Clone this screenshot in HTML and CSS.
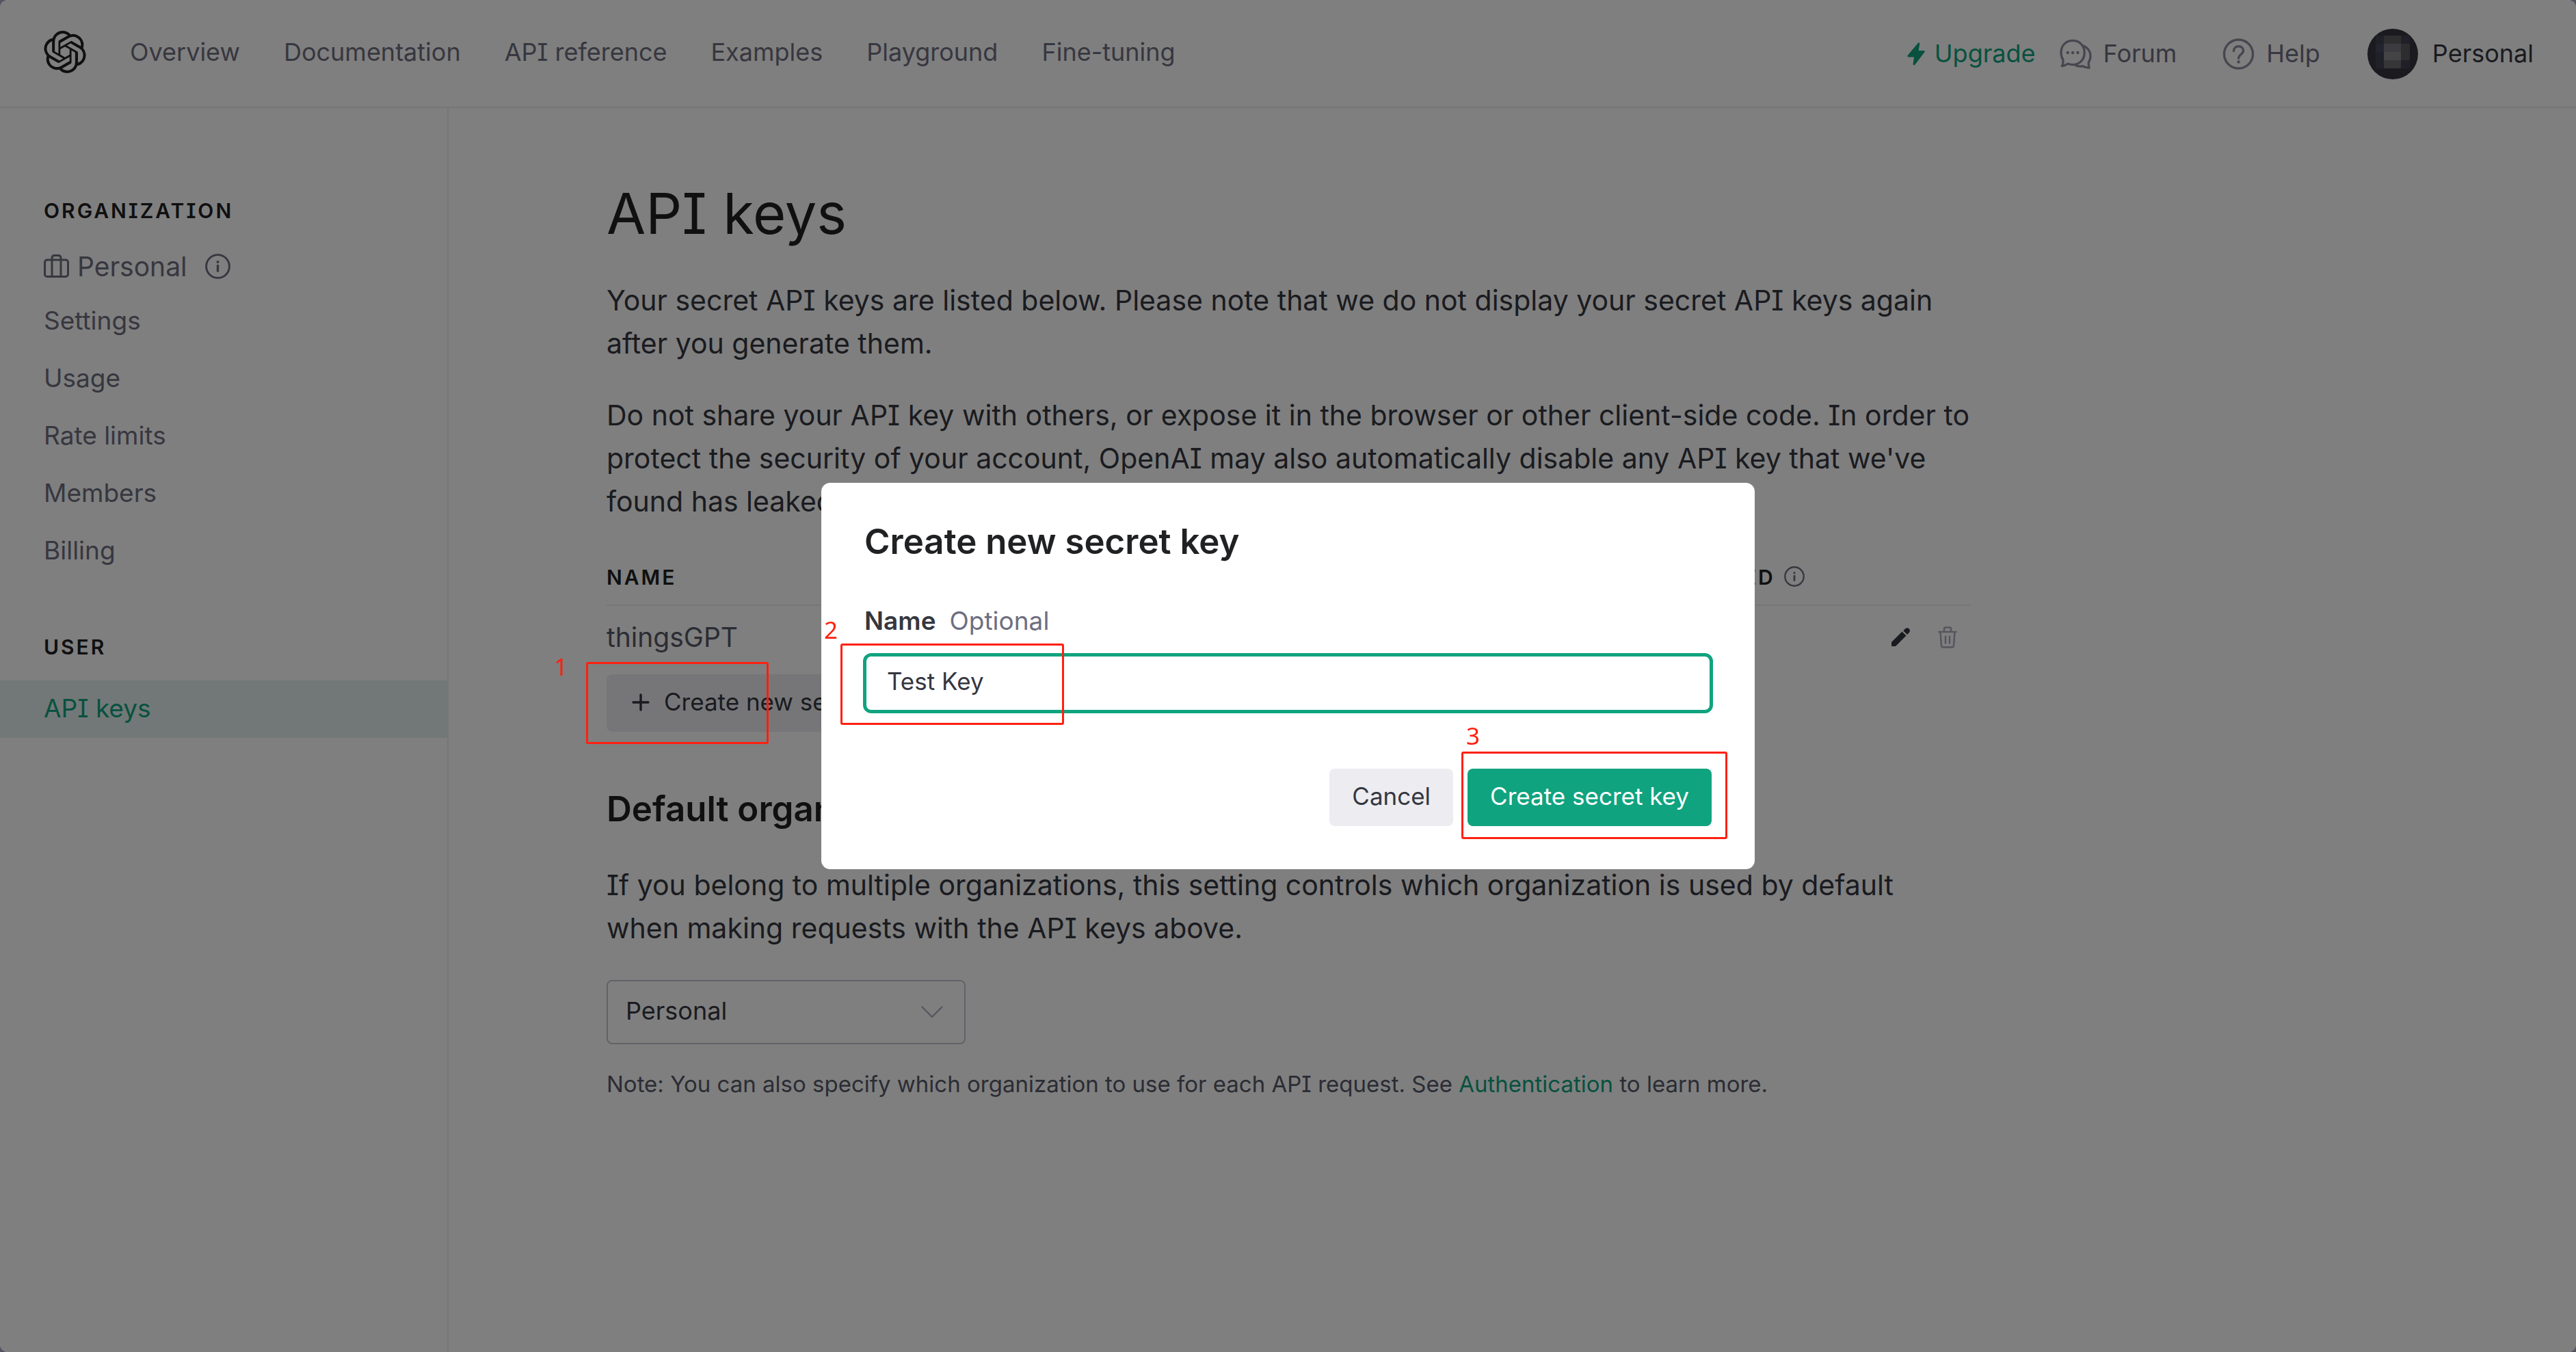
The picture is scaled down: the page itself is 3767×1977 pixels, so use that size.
FILE: index.html
```html
<!DOCTYPE html>
<html lang="en">
<head>
<meta charset="utf-8">
<title>API keys</title>
<link rel="stylesheet" href="styles.css">
</head>
<body>
<svg class="defs" aria-hidden="true">
  <symbol id="info" viewBox="0 0 14 14"><circle cx="7" cy="7" r="6.4" fill="none" stroke="currentColor" stroke-width="1.1"/><path d="M7 6.6v3" stroke="currentColor" stroke-width="1.3" stroke-linecap="round"/><circle cx="7" cy="4.5" r=".75" fill="currentColor"/></symbol>
</svg>
<div class="page">
  <header class="header">
    <a class="logo" href="#" aria-label="Home"><svg viewBox="0 0 24 24" fill="currentColor"><path d="M22.2819 9.8211a5.9847 5.9847 0 0 0-.5157-4.9108 6.0462 6.0462 0 0 0-6.5098-2.9A6.0651 6.0651 0 0 0 4.9807 4.1818a5.9847 5.9847 0 0 0-3.9977 2.9 6.0462 6.0462 0 0 0 .7427 7.0966 5.98 5.98 0 0 0 .511 4.9107 6.051 6.051 0 0 0 6.5146 2.9001A5.9847 5.9847 0 0 0 13.2599 24a6.0557 6.0557 0 0 0 5.7718-4.2058 5.9894 5.9894 0 0 0 3.9977-2.9001 6.0557 6.0557 0 0 0-.7475-7.0729zm-9.022 12.6081a4.4755 4.4755 0 0 1-2.8764-1.0408l.1419-.0804 4.7783-2.7582a.7948.7948 0 0 0 .3927-.6813v-6.7369l2.02 1.1686a.071.071 0 0 1 .038.052v5.5826a4.504 4.504 0 0 1-4.4945 4.4944zm-9.6607-4.1254a4.4708 4.4708 0 0 1-.5346-3.0137l.142.0852 4.783 2.7582a.7712.7712 0 0 0 .7806 0l5.8428-3.3685v2.3324a.0804.0804 0 0 1-.0332.0615L9.74 19.9502a4.4992 4.4992 0 0 1-6.1408-1.6464zM2.3408 7.8956a4.485 4.485 0 0 1 2.3655-1.9728V11.6a.7664.7664 0 0 0 .3879.6765l5.8144 3.3543-2.0201 1.1685a.0757.0757 0 0 1-.071 0l-4.8303-2.7865A4.504 4.504 0 0 1 2.3408 7.872zm16.5963 3.8558L13.1038 8.364 15.1192 7.2a.0757.0757 0 0 1 .071 0l4.8303 2.7913a4.4944 4.4944 0 0 1-.6765 8.1042v-5.6772a.79.79 0 0 0-.407-.667zm2.0107-3.0231l-.142-.0852-4.7735-2.7818a.7759.7759 0 0 0-.7854 0L9.409 9.2297V6.8974a.0662.0662 0 0 1 .0284-.0615l4.8303-2.7866a4.4992 4.4992 0 0 1 6.6802 4.66zM8.3065 12.863l-2.02-1.1638a.0804.0804 0 0 1-.038-.0567V6.0742a4.4992 4.4992 0 0 1 7.3757-3.4537l-.142.0805L8.704 5.459a.7948.7948 0 0 0-.3927.6813zm1.0976-2.3654l2.602-1.4998 2.6069 1.4998v2.9994l-2.5974 1.4997-2.6067-1.4997Z"/></svg></a>
    <nav class="nav">
      <a href="#">Overview</a>
      <a href="#">Documentation</a>
      <a href="#">API reference</a>
      <a href="#">Examples</a>
      <a href="#">Playground</a>
      <a href="#">Fine-tuning</a>
    </nav>
    <div class="tools">
      <a class="tool upgrade" href="#"><svg class="bolt" viewBox="0 0 26 34" fill="currentColor"><path d="M16 .8 1 18.6c-1.200 1.400-.5 2.800 1.200 2.800H10L8.600 31.500c-.2 2 1.400 2.600 2.600 1.200L25.200 14.600c1-1.400.4-2.600-1.200-2.600h-7.400L18.200 2C18.400.2 17-.4 16 .8z"/></svg>Upgrade</a>
      <a class="tool forum" href="#"><svg class="round" viewBox="0 0 48 46" fill="none" stroke="currentColor" stroke-width="3.400" stroke-linejoin="round" stroke-linecap="round"><path d="M3.500 41c1.800-3.500 2-6.500 1.500-9.500C2.800 28.500 2 24.500 2 21 2 10 9.500 3 19.500 3S37 10.500 37 21s-7.500 18-17.500 18c-3 0-5-.6-7-1.400-2.500.4-5 3.400-9 3.400z"/><path d="M36 11c6 3 10 8 10 15 0 4-1.200 7-2.800 9.500-.4 3 .2 5.500 .8 8-4.500 0-7-.8-9.500-2.500-4.500 1-8.500.5-12-2"/><g fill="currentColor" stroke="none"><circle cx="12" cy="21" r="2.300"/><circle cx="19.500" cy="21" r="2.300"/><circle cx="27" cy="21" r="2.300"/></g></svg>Forum</a>
      <a class="tool help" href="#"><svg class="round" viewBox="0 0 46 46" fill="none" stroke="currentColor" stroke-width="3.400"><circle cx="23" cy="23" r="21"/><path d="M16 18.500c0-4 3-6.700 7-6.700s7 2.700 7 6.500c0 5-7 5.500-7 11" stroke-linecap="round"/><circle cx="23" cy="34.500" r="2.300" fill="currentColor" stroke="none"/></svg>Help</a>
      <button class="tool account" type="button"><svg class="avatar" viewBox="0 0 74 74"><clipPath id="disc"><circle cx="37" cy="37" r="37"/></clipPath><g clip-path="url(#disc)"><path fill="#34353f" d="M0 0h74v74H0z"/><path fill="#3f4150" d="M12 10h50v48H12z"/><path fill="#46485c" d="M12 22h12v12H12z"/><path fill="#5c5c62" d="M24 10h25v12H24z"/><path fill="#787880" d="M24 22h25v12H24z"/><path fill="#88868c" d="M24 34h25v12H24z"/><path fill="#6c6a70" d="M24 46h25v12H24z"/><path fill="#5a5a60" d="M49 22h13v24H49z"/></g></svg>Personal</button>
    </div>
  </header>
  <div class="body">
    <aside class="sidebar">
      <h2 class="group">ORGANIZATION</h2>
      <div class="org"><svg class="case" viewBox="0 0 37 34" fill="none" stroke="currentColor" stroke-width="3"><rect x="1.500" y="8" width="34" height="24.500" rx="3.500"/><path d="M12 32V5.500c0-2.500 1.500-4 4-4h5c2.500 0 4 1.500 4 4V32"/></svg>Personal<svg class="info"><use href="#info"/></svg></div>
      <a class="item" href="#">Settings</a>
      <a class="item" href="#">Usage</a>
      <a class="item" href="#">Rate limits</a>
      <a class="item" href="#">Members</a>
      <a class="item" href="#">Billing</a>
      <h2 class="group user">USER</h2>
      <a class="item active" href="#">API keys</a>
    </aside>
    <main class="main">
      <h1>API keys</h1>
      <p>Your secret API keys are listed below. Please note that we do not display your secret API keys again after you generate them.</p>
      <p>Do not share your API key with others, or expose it in the browser or other client-side code. In order to protect the security of your account, OpenAI may also automatically disable any API key that we've found has leaked publicly.</p>
      <table class="keys">
        <thead><tr><th class="c-name">NAME</th><th class="c-key">KEY</th><th class="c-date">CREATED</th><th class="c-used">LAST USED<svg class="info small"><use href="#info"/></svg></th><th class="c-act"></th></tr></thead>
        <tbody><tr><td>thingsGPT</td><td></td><td></td><td></td><td>
          <div class="actions">
            <button type="button" aria-label="Edit"><svg viewBox="0 0 28 28" fill="currentColor"><path d="M0 27v-6L15.500 5.500l6 6L6 27zM17.200 4.200 20 1.500c1.800-1.800 4.200-1.600 5.800 0s1.700 3.700 0 5.500l-2.700 2.900z"/></svg></button>
            <button class="trash" type="button" aria-label="Delete"><svg viewBox="0 0 28 32" fill="none" stroke="currentColor" stroke-width="2.600" stroke-linecap="round" stroke-linejoin="round"><path d="M1.500 8h25M9 7.500V3.500c0-1.200.8-2 2-2h6c1.200 0 2 .8 2 2v4M3.500 8.500 5 28c.1 1.600.9 2.400 2.400 2.400h13.200c1.500 0 2.300-.8 2.400-2.400L24.500 8.500M11 14.500v10M17 14.500v10"/></svg></button>
          </div></td></tr></tbody>
      </table>
      <button class="btn create" type="button"><svg viewBox="0 0 26 26" stroke="currentColor" stroke-width="3.400" stroke-linecap="round"><path d="M13 2v22M2 13h22"/></svg>Create new secret key</button>
      <h2 class="section">Default organization</h2>
      <p>If you belong to multiple organizations, this setting controls which organization is used by default when making requests with the API keys above.</p>
      <div class="select"><select aria-label="Default organization"><option>Personal</option></select><svg viewBox="0 0 32 18" fill="none" stroke="currentColor" stroke-width="2.400" stroke-linecap="round" stroke-linejoin="round"><path d="M1.500 1.500 16 16 30.500 1.500"/></svg></div>
      <p class="note">Note: You can also specify which organization to use for each API request. See <a href="#">Authentication</a> to learn more.</p>
    </main>
  </div>
</div>
<div class="overlay">
  <form class="dialog" role="dialog" aria-labelledby="dialog-title">
    <h2 id="dialog-title">Create new secret key</h2>
    <label for="key-name"><b>Name</b><span>Optional</span></label>
    <input id="key-name" type="text" value="Test Key">
    <div class="buttons">
      <button class="btn" type="button">Cancel</button>
      <button class="btn primary" type="button">Create secret key</button>
    </div>
  </form>
</div>
<div class="mark mark-1"><span>1</span></div>
<div class="mark mark-2"><span>2</span></div>
<div class="mark mark-3"><span>3</span></div>
</body>
</html>
```

FILE: styles.css
```css
* { box-sizing: border-box; }

html { background: #565661; }

body {
  margin: 0;
  color: #353740;
  font-family: Inter, "Liberation Sans", sans-serif;
  font-size: 41px;
  line-height: 63px;
  font-feature-settings: "cv08";
}

h1, h2, p { margin: 0; }
a { color: inherit; text-decoration: none; }
button, input, select { font: inherit; font-feature-settings: inherit; color: inherit; }
svg { display: block; flex: none; }
.defs { position: absolute; width: 0; height: 0; }

.page {
  display: flex;
  flex-direction: column;
  min-height: 100vh;
  background: #fff;
  border-radius: 12px;
}

.header {
  display: flex;
  align-items: center;
  height: 158px;
  padding: 0 62px 4px 64px;
  border-bottom: 2px solid #ececf1;
  font-size: 36px;
  color: #6e6e80;
}
.logo { color: #202123; margin-right: 64px; }
.logo svg { width: 62px; height: 62px; }
.nav { display: flex; gap: 64px; }
.tools { display: flex; align-items: center; margin-left: auto; padding-top: 5px; }
.tool { display: flex; align-items: center; gap: 17px; }
.upgrade { gap: 13px; color: #10a37f; }
.bolt { width: 28px; height: 34px; }
.round { width: 47px; height: 46px; color: #8e8ea0; }
.forum { margin-left: 35px; }
.help { margin-left: 67px; }
.account {
  margin-left: 69px;
  padding: 0;
  gap: 21px;
  border: 0;
  background: none;
  color: #353740;
}
.avatar { width: 74px; height: 74px; }

.body { display: flex; flex: 1; }

.sidebar {
  width: 656px;
  flex: none;
  padding-top: 129px;
  border-right: 2px solid #ececf1;
  color: #6e6e80;
}
.group {
  padding-left: 64px;
  color: #202123;
  font-size: 30px;
  font-weight: 600;
  line-height: 42px;
  letter-spacing: 3px;
}
.user { margin: 77px 0 28px; }
.org {
  display: flex;
  align-items: center;
  height: 78px;
  margin-top: 21px;
  padding-left: 64px;
  font-size: 39px;
}
.case { width: 37px; height: 34px; margin-right: 12px; }
.info { width: 37px; height: 37px; margin-left: 27px; }
.item {
  display: flex;
  align-items: center;
  height: 84px;
  padding: 0 0 4px 64px;
  font-size: 37px;
}
.active { background: #e4f0ee; color: #10a37f; }

.main { width: 2226px; padding: 104px 0 0 231px; }
h1 {
  margin-bottom: 46px;
  color: #202123;
  font-size: 83px;
  font-weight: 400;
  line-height: 100px;
}
.main p + p { margin-top: 42px; }

.keys {
  width: 100%;
  margin: 58px 0 9px;
  border-collapse: collapse;
  table-layout: fixed;
}
.keys th {
  padding: 0 0 19px;
  border-bottom: 2px solid #ececf1;
  color: #202123;
  font-size: 30px;
  font-weight: 600;
  line-height: 42px;
  letter-spacing: 3px;
  text-align: left;
}
.keys .c-name, .keys .c-key, .keys .c-date { width: 505px; }
.keys .c-used { width: 291px; white-space: nowrap; }
.keys td { padding: 14px 0; color: #565869; font-size: 39px; }
.info.small { display: inline-block; width: 30px; height: 30px; margin-left: 13px; color: #6e6e80; vertical-align: -3px; }
.actions { display: flex; justify-content: flex-end; gap: 40px; padding-right: 20px; }
.actions button { padding: 0; border: 0; background: none; color: #353740; }
.actions svg { width: 28px; height: 32px; }
.actions .trash { color: #acacbe; }

.btn {
  height: 84px;
  padding: 0 33px 3px;
  border: 0;
  border-radius: 8px;
  background: #ececf1;
  font-size: 35px;
}
.create { display: flex; align-items: center; padding: 0 37px 3px; gap: 21px; }
.create svg { width: 26px; height: 26px; }

.section {
  margin: 81px 0 49px;
  color: #202123;
  font-size: 51px;
  font-weight: 600;
}
.select {
  display: grid;
  align-items: center;
  width: 525px;
  margin: 44px 0 32px;
  font-size: 36px;
}
.select > * { grid-area: 1 / 1; }
.select select {
  width: 100%;
  height: 94px;
  padding: 0 26px 4px;
  border: 2px solid #c5c5d2;
  border-radius: 8px;
  appearance: none;
  background: none;
}
.select svg { justify-self: end; width: 32px; height: 18px; margin-right: 33px; color: #acacbe; }
.note { color: #565869; font-size: 33px; line-height: 52px; }
.note a { color: #10a37f; }

.overlay {
  position: fixed;
  inset: 0;
  display: flex;
  align-items: center;
  justify-content: center;
  border-radius: 12px;
  background: rgba(0, 0, 0, .5);
}
.dialog {
  display: flex;
  flex-direction: column;
  width: 1365px;
  padding: 54px 63px 63px;
  border-radius: 13px;
  background: #fff;
}
.dialog h2 { color: #202123; font-size: 51px; font-weight: 600; }
.dialog label {
  display: flex;
  gap: 20px;
  margin: 58px 0 21px;
  font-size: 37px;
  line-height: 53px;
}
.dialog b { font-weight: 600; }
.dialog label span { color: #6e6e80; }
.dialog input {
  height: 88px;
  margin: 0 -2px;
  padding: 0 30px 6px;
  border: 5px solid #10a37f;
  border-radius: 12px;
  outline: 0;
  font-size: 35px;
}
.buttons { display: flex; justify-content: flex-end; gap: 21px; margin-top: 81px; }
.primary { background: #10a37f; color: #fff; }

/* Numbered callouts that lie over the screen */
.mark {
  position: absolute;
  border: 3px solid #ff2010;
  border-radius: 3px;
  color: #ff2010;
  font: 35px/40px "Noto Sans", sans-serif;
}
.mark span { position: absolute; }
.mark-1 { left: 857px; top: 968px; width: 267px; height: 120px; }
.mark-2 { left: 1229px; top: 941px; width: 327px; height: 119px; }
.mark-3 { left: 2137px; top: 1099px; width: 389px; height: 128px; }
.mark-1 span { left: -50px; top: -16px; }
.mark-2 span { left: -27px; top: -43px; }
.mark-3 span { left: 4px; top: -46px; }
```
